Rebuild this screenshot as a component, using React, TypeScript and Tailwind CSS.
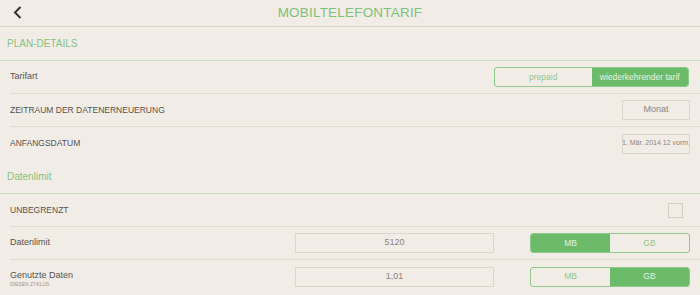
import { FC, ReactNode } from 'react';

const GREEN = 'bg-[#6cbb6a]';

interface SegmentProps {
  options: string[];
  active: number;
  className?: string;
}

const Segment: FC<SegmentProps> = ({ options, active, className }) => (
  <div className={`flex h-[20px] overflow-hidden rounded-[3px] border border-[#8fc88d] ${className ?? ''}`}>
    {options.map((opt, i) => (
      <div
        key={opt}
        className={`flex flex-1 items-center justify-center text-[8.5px] ${
          i === active ? `${GREEN} text-[#e4f2e2]` : 'text-[#8fc88d]'
        }`}
      >
        {opt}
      </div>
    ))}
  </div>
);

const Row: FC<{ children: ReactNode; last?: boolean }> = ({ children, last }) => (
  <div className="pl-[10px]">
    <div className={`flex h-[33px] items-center pr-[10px] ${last ? '' : 'border-b-[1.5px] border-[#e2dbd4]'}`}>
      {children}
    </div>
  </div>
);

const SectionHeader: FC<{ title: string }> = ({ title }) => (
  <div className="flex h-[34px] items-center border-b-[1.5px] border-[#cbdfc5] pl-[7px] text-[10px] text-[#86c283]">
    {title}
  </div>
);

const Box: FC<{ children: ReactNode; className?: string }> = ({ children, className }) => (
  <div className={`flex h-[20px] items-center justify-center whitespace-nowrap border border-[#ddd6cf] text-[#8a8580] ${className ?? ''}`}>
    {children}
  </div>
);

export default function App() {
  return (
    <div
      className="h-[295px] w-[700px] overflow-hidden bg-[#f2ece6] text-[#56534f]"
      style={{ fontFamily: '"Liberation Sans", Arial, sans-serif' }}
    >
      <div className="relative flex h-[27px] items-center justify-center border-b-[1.5px] border-[#ddd6cf]">
        <svg className="absolute left-[13px] top-[6px]" width="9" height="13" viewBox="0 0 9 13">
          <path d="M7.5 1 L2 6.5 L7.5 12" fill="none" stroke="#333" strokeWidth="2" />
        </svg>
        <span className="text-[13.5px] tracking-[0.2px] text-[#7cc279]">MOBILTELEFONTARIF</span>
      </div>

      <SectionHeader title="PLAN-DETAILS" />
      <Row>
        <span className="flex-1 text-[9px]">Tarifart</span>
        <Segment options={['prepaid', 'wiederkehrender tarif']} active={1} className="mr-[1px] w-[195px]" />
      </Row>
      <Row>
        <span className="flex-1 text-[8.5px]">ZEITRAUM DER DATENERNEUERUNG</span>
        <Box className="w-[68px] text-[9px]">Monat</Box>
      </Row>
      <Row last>
        <span className="flex-1 text-[8.5px]">ANFANGSDATUM</span>
        <Box className="w-[68px] overflow-hidden text-[7px]">1. Mär. 2014 12 vorm.</Box>
      </Row>

      <SectionHeader title="Datenlimit" />
      <Row>
        <span className="flex-1 text-[8.5px]">UNBEGRENZT</span>
        <div className="mr-[7px] h-[15px] w-[15px] border border-[#d6cfc8]" />
      </Row>
      <Row>
        <span className="w-[285px] text-[9px]">Datenlimit</span>
        <Box className="w-[199px] text-[9px]">5120</Box>
        <div className="flex-1" />
        <Segment options={['MB', 'GB']} active={0} className="w-[160px]" />
      </Row>
      <Row last>
        <div className="flex w-[285px] flex-col pt-[4px]">
          <span className="text-[9px] leading-[11px]">Genutzte Daten</span>
          <span className="text-[5px] leading-[7px] text-[#9a948e]">DIESEN ZYKLUS</span>
        </div>
        <Box className="w-[199px] text-[9px]">1,01</Box>
        <div className="flex-1" />
        <Segment options={['MB', 'GB']} active={1} className="w-[160px]" />
      </Row>
    </div>
  );
}
